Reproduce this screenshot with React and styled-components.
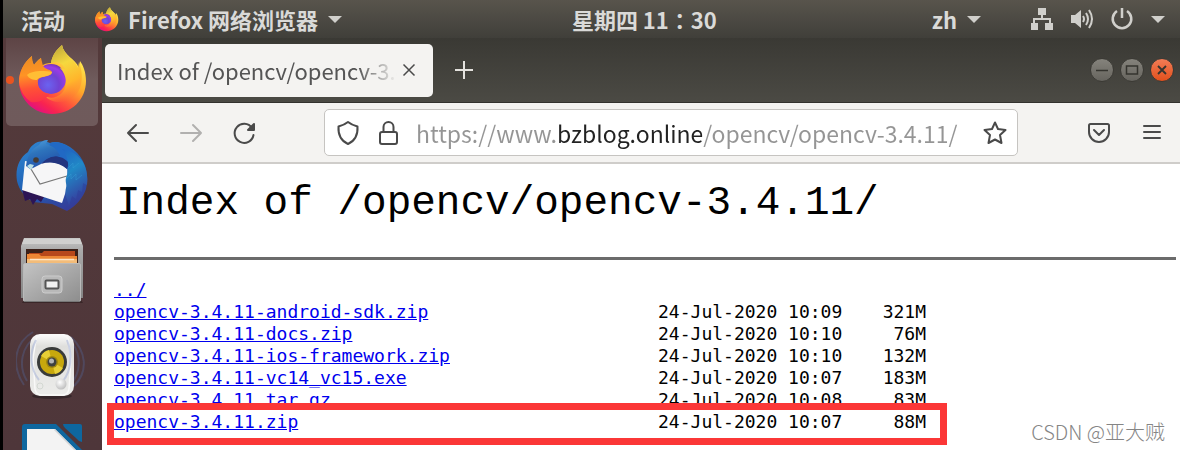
import React from 'react';
import styled, {createGlobalStyle} from 'styled-components';

const GlobalStyle = createGlobalStyle`
	* {
		box-sizing : border-box;
	}
	body {
		margin : 0;
		background : #000;
		font-family : "Noto Sans CJK SC", "Noto Sans", sans-serif;
	}
	button {
		padding : 0;
		border : 0;
		background : none;
		color : inherit;
		font : inherit;
		cursor : pointer;
	}
	svg {
		display : block;
	}
`
const Desktop = styled.div`
	display : flex;
	flex-direction : column;
	height : 100vh;
	padding-left : 3px;
	overflow : hidden;
`

// top panel
const Panel = styled.header`
	flex : none;
	display : flex;
	align-items : center;
	height : 38px;
	padding : 0 14px 0 18px;
	background : linear-gradient(#58544c, #403f3a);
	color : #dadad8;
	font-size : 22px;
	font-weight : 700;
	line-height : 38px;
`
const PanelItem = styled.button`
	display : flex;
	align-items : center;
	gap : ${props => props.$gap || 9}px;
	height : 38px;
	margin-right : ${props => props.$after || 0}px;
	white-space : nowrap;
	color : #dadad8;
`
const Clock = styled.div`
	flex : 1;
	padding-left : 14px;
	text-align : center;
	font-family : "Noto Sans CJK TC", "Noto Sans", sans-serif;
`

const Workspace = styled.div`
	flex : 1;
	display : flex;
	min-height : 0;
`

// dock
const Dock = styled.nav`
	flex : none;
	width : 99px;
	overflow : hidden;
	background : linear-gradient(#543a3b, #4e363a);
`
const DockList = styled.div`
	display : flex;
	flex-direction : column;
	gap : 3px;
	padding : 0 4px 0 3px;
	margin-top : -4px;
`
const DockButton = styled.button`
	flex : none;
	position : relative;
	display : flex;
	align-items : center;
	justify-content : center;
	height : 92px;
	border-radius : 5px;
	background : ${props => props.$active ? 'linear-gradient(#5c4243, #6f5b5c 50%, #6f5a5b)' : 'none'};
`
const RunningDot = styled.span`
	position : absolute;
	left : 0;
	top : 42px;
	width : 8px;
	height : 8px;
	border-radius : 50%;
	background : #e95420;
`

// browser window
const Window = styled.main`
	flex : 1;
	display : flex;
	flex-direction : column;
	min-width : 0;
	background : #fff;
`
const TabStrip = styled.div`
	flex : none;
	display : flex;
	align-items : center;
	height : 65px;
	padding : 0 6px 0 3px;
	background : linear-gradient(#3a3934, #4b4a44);
	border-bottom : 1px solid #33322e;
`
const Tab = styled.div`
	display : flex;
	align-items : center;
	width : 328px;
	height : 53px;
	padding : 0 12px;
	border-radius : 5px;
	background : #f4f3f1;
	color : #555;
`
const TabTitle = styled.button`
	flex : 1;
	min-width : 0;
	overflow : hidden;
	white-space : nowrap;
	text-align : left;
	font-size : 22px;
	line-height : 34px;
	mask-image : linear-gradient(to right, #000 86%, transparent);
`
const TabClose = styled.button`
	width : 24px;
	height : 24px;
	display : grid;
	place-items : center;
`
const NewTab = styled.button`
	width : 62px;
	height : 53px;
	display : grid;
	place-items : center;
	color : #e4e2de;
`
const WindowButtons = styled.div`
	display : flex;
	gap : 6px;
	margin-left : auto;
`
const WindowButton = styled.button`
	width : 24px;
	height : 24px;
	display : grid;
	place-items : center;
	border-radius : 50%;
	border : 1px solid #3b3a35;
	color : #35342f;
	background : ${props => props.$close ? 'linear-gradient(#f27c56, #e2501c)' : 'linear-gradient(#85837c, #66645e)'};
`
const Toolbar = styled.div`
	flex : none;
	display : flex;
	align-items : center;
	height : 61px;
	padding : 0 2px 0 9px;
	background : #f4f3f1;
	border-bottom : 2px solid #cfcdca;
	color : #4a4a4a;
`
const ToolButton = styled.button`
	flex : none;
	display : grid;
	place-items : center;
	width : 53px;
	height : 44px;
	color : ${props => props.disabled ? '#b1b0af' : '#4a4a4a'};
`
const UrlBar = styled.div`
	flex : 1;
	display : flex;
	align-items : center;
	gap : 16px;
	min-width : 0;
	height : 47px;
	margin : 0 54px;
	padding : 0 10px 0 11px;
	background : #fff;
	border : 1px solid #c6c4c1;
	border-radius : 5px;
`
const IconButton = styled.button`
	flex : none;
	display : grid;
	place-items : center;
`
// the host part of the address is darker than the rest
const UrlInput = styled.input`
	flex : 1;
	min-width : 0;
	height : 42px;
	padding : 0;
	border : 0;
	outline : 0;
	font-family : inherit;
	font-size : 23px;
	background : linear-gradient(to right, #959595 139px, #222 139px, #222 286px, #959595 286px);
	background-clip : text;
	-webkit-text-fill-color : transparent;
`

// listing
const Page = styled.section`
	flex : 1;
	position : relative;
	min-height : 0;
	padding : 6px 4px 0 12px;
	color : #000;
`
const Title = styled.h1`
	margin : 0 0 21px 2px;
	font-family : "Liberation Mono", monospace;
	font-size : 41px;
	font-weight : 400;
	line-height : 66px;
	white-space : nowrap;
`
const Rule = styled.hr`
	height : 3px;
	margin : 0 0 19px;
	border : 0;
	background : #6b6b6b;
`
const Listing = styled.table`
	width : 812px;
	table-layout : fixed;
	border-collapse : collapse;
	font-family : "DejaVu Sans Mono", monospace;
	font-size : 18px;
	line-height : 22px;
	td {
		padding : 0;
		height : 22px;
		white-space : nowrap;
	}
`
const Row = styled.tr`
	position : relative;
`
const Marker = styled.span`
	position : absolute;
	inset : -8px -21px -12px -7px;
	border : 7px solid #fb3737;
	pointer-events : none;
`
const FileLink = styled.a`
	color : #0000ee;
	text-decoration : underline;
`
const SizeCell = styled.td`
	text-align : right;
`
const Watermark = styled.div`
	position : absolute;
	right : 15px;
	bottom : 3px;
	font-size : 20px;
	font-weight : 300;
	line-height : 30px;
	color : #858585;
`

const Caret = () => (
	<svg width="16" height="9" viewBox="0 0 16 9"><path d="M1 1h14L8 8z" fill="#d0cfcb" /></svg>
)

const FirefoxIcon = ({size, id}) => (
	<svg width={size} height={size} viewBox="0 0 72 72">
		<defs>
			<linearGradient id={id + 'body'} x1="0.8" y1="0.1" x2="0.25" y2="0.95">
				<stop offset="0.1" stopColor="#ffe14a" />
				<stop offset="0.4" stopColor="#ffab2a" />
				<stop offset="0.65" stopColor="#ff5a3a" />
				<stop offset="0.85" stopColor="#f9244f" />
				<stop offset="1" stopColor="#e2117f" />
			</linearGradient>
			<linearGradient id={id + 'flame'} x1="0.3" y1="0" x2="0.6" y2="1">
				<stop offset="0" stopColor="#bda63a" />
				<stop offset="0.35" stopColor="#f5d83f" />
				<stop offset="0.7" stopColor="#ffb52b" />
				<stop offset="1" stopColor="#ff6a36" stopOpacity="0" />
			</linearGradient>
			<radialGradient id={id + 'globe'} cx="0.4" cy="0.7" r="0.75">
				<stop offset="0" stopColor="#6a63f0" />
				<stop offset="0.5" stopColor="#7142d2" />
				<stop offset="0.8" stopColor="#9a3be6" />
				<stop offset="1" stopColor="#6b2fa8" />
			</radialGradient>
			<linearGradient id={id + 'head'} x1="0.3" y1="0" x2="0.4" y2="1">
				<stop offset="0" stopColor="#e98b22" />
				<stop offset="0.4" stopColor="#ff9425" />
				<stop offset="0.7" stopColor="#ff5236" />
				<stop offset="1" stopColor="#fb3347" />
			</linearGradient>
		</defs>
		<path d="M16 12C8 18 3 28 3 37c0 19 15 33 33 33 19 0 34-14 34-33 0-9-3-16-6-20l-1 7C59 14 48 12 46 1c-6 5-10 11-11 18-4 0-7 1-10 3v-8c-3 2-5 4-7 7-2-3-2-6-2-9z" fill={'url(#' + id + 'body)'} />
		<circle cx="35" cy="35" r="15" fill={'url(#' + id + 'globe)'} />
		<path d="M46 1c-6 5-10 11-11 18 7-2 12 1 14 6l-5-1c7 7 8 18 2 25-5 5-12 6-17 3 9 10 29 8 35-8 3-9 2-18-1-26l-1 6C58 14 48 12 46 1z" fill={'url(#' + id + 'flame)'} />
		<path d="M16 12C8 18 3 28 3 38c1 9 6 16 12 20 7 1 14-2 19-8-9-1-13-7-12-14 2-3 5-3 9-4 3-1 5-2 5-4-2-3-6-2-9-6l-2-8c-3 2-5 4-7 7-2-3-2-6-2-9z" fill={'url(#' + id + 'head)'} />
		<path d="M11 31c3-3 9-4 14-4 5 0 8 0 11 1 0 2-2 3-5 4-4 1-8 1-10 4-4 0-8-1-10-5z" fill="#ffbe35" />
	</svg>
)

const ThunderbirdIcon = () => (
	<svg width="72" height="72" viewBox="0 0 72 72">
		<defs>
			<linearGradient id="tbBlue" x1="0.2" y1="0" x2="0.7" y2="1">
				<stop offset="0" stopColor="#2f83cf" />
				<stop offset="0.5" stopColor="#1f62b5" />
				<stop offset="1" stopColor="#353b98" />
			</linearGradient>
			<linearGradient id="tbWing" x1="0" y1="0" x2="0.3" y2="1">
				<stop offset="0" stopColor="#1f63c2" />
				<stop offset="0.45" stopColor="#2189c6" />
				<stop offset="1" stopColor="#35409f" />
			</linearGradient>
			<linearGradient id="tbHead" x1="0.2" y1="0" x2="0.6" y2="1">
				<stop offset="0" stopColor="#4f9fdd" />
				<stop offset="0.4" stopColor="#2e74bc" />
				<stop offset="1" stopColor="#1f4da8" />
			</linearGradient>
		</defs>
		<path d="M12 13C3 19-1 30 1 42c2 9 8 16 16 21l19 2 15 7c9-5 16-13 19-22 4-17-2-33-16-42-8-5-15-6-20-4-10-5-19 1-22 9z" fill="url(#tbBlue)" />
		<path d="M6 50l3 12 5-2 3 6 4-6 4 3 3-5-12-9z" fill="#2c1555" />
		<path d="M9 22L6 51l40 13 6-18-1-20-15-3-17 1z" fill="#f6f6f7" />
		<path d="M12 25l12 20 27-8" fill="none" stroke="#777" strokeWidth="1.2" />
		<path d="M34 4c10-3 20 3 26 12l-9 14c-6-6-14-8-22-7z" fill="#2169c4" />
		<path d="M25 25c6-9 19-11 28-1l-2 6c-7-6-16-8-26-5z" fill="#23357f" />
		<path d="M10 27c1-9 5-17 13-21 2-3 4-5 9-5l-2 4c7 2 12 6 14 12-8-1-14 3-19 8l-8 4-3 1z" fill="url(#tbHead)" />
		<path d="M11 27l3-2 4 1-3 5z" fill="#b9dfe4" />
		<circle cx="20" cy="21" r="2.800" fill="#443b35" />
		<path d="M46 10c20 4 27 18 25 36l-4-2-1 9-4-2-2 9-4-3-3 10c-1-6-5-11-3-18 1-4-1-6 0-10 3-8 4-19-4-29z" fill="url(#tbWing)" />
		<path d="M50 40l5-5v5l5-5v6l6-5M52 29l5-5v5l6-5" fill="none" stroke="#37a0d6" strokeWidth="1" opacity="0.4" />
	</svg>
)

const FilesIcon = () => (
	<svg width="72" height="72" viewBox="0 0 72 72">
		<defs>
			<linearGradient id="fiFront" x1="0" y1="0" x2="1" y2="1">
				<stop offset="0" stopColor="#c4c4c4" />
				<stop offset="1" stopColor="#8d8d8d" />
			</linearGradient>
			<linearGradient id="fiBack" x1="0" y1="0" x2="0" y2="1">
				<stop offset="0" stopColor="#c8c8c7" />
				<stop offset="0.2" stopColor="#aaa" />
				<stop offset="1" stopColor="#858585" />
			</linearGradient>
		</defs>
		<path d="M8 66h57l2 3H6z" fill="#392628" />
		<path d="M8 4h56l3 8v52H5V12z" fill="url(#fiBack)" />
		<path d="M8 5h56l2 5H6z" fill="#d0d0cf" />
		<path d="M10 15h52v15H10z" fill="#3b211a" />
		<path d="M13 19h13l2-2h31v12H13z" fill="#b8481b" />
		<path d="M11 20h12l2 2h36v8H11z" fill="#ed8735" />
		<path d="M11 25h50v5H11z" fill="#f3bc79" />
		<path d="M14 25.5h44" stroke="#ffe6c8" strokeWidth="1.5" />
		<rect x="7.500" y="29.500" width="57" height="38" rx="1.500" fill="url(#fiFront)" stroke="#bababa" />
		<path d="M8 67.5h56" stroke="#777" />
		<rect x="26" y="42" width="20" height="17" rx="3" fill="#b9b9b9" stroke="#ccc" />
		<rect x="29.500" y="46.500" width="13" height="8" rx="1" fill="#f0f0f0" stroke="#555" strokeWidth="2" />
	</svg>
)

const RhythmboxIcon = () => (
	<svg width="72" height="72" viewBox="0 0 72 72">
		<defs>
			<linearGradient id="rbBody" x1="0" y1="0" x2="0" y2="1">
				<stop offset="0" stopColor="#fdfdfd" />
				<stop offset="0.2" stopColor="#dfdfdd" />
				<stop offset="1" stopColor="#ececea" />
			</linearGradient>
			<radialGradient id="rbKnob" cx="0.4" cy="0.35" r="0.7">
				<stop offset="0" stopColor="#fff" />
				<stop offset="1" stopColor="#bbb" />
			</radialGradient>
		</defs>
		<g fill="none" stroke="#526292" strokeWidth="2" opacity="0.4">
			<path d="M17 3C-2 14-5 37 8 56M21 7C5 17 2 37 11 52M55 8c15 14 18 34 3 49M57 15c8 12 8 28-2 40" />
		</g>
		<ellipse cx="36" cy="67" rx="20" ry="3" fill="#35272a" />
		<rect x="14" y="5" width="44" height="62" rx="10" fill="url(#rbBody)" />
		<path d="M20 10q2-4 7-4h18q5 0 7 4l3 20-2 30q-1 6-7 6H26q-6 0-7-6l-2-30z" fill="none" stroke="#f9f9f8" strokeWidth="1.5" />
		<g fill="none" stroke="#a5b3d7" strokeWidth="2" opacity="0.55">
			<path d="M20 11C13 24 14 40 23 51M51 11c6 15 4 31-4 41" />
		</g>
		<circle cx="36" cy="33" r="15" fill="#393b3a" />
		<circle cx="36" cy="33" r="12" fill="#c8a80d" />
		<path d="M36 33L25 27a12 12 0 0 1 8-6zM36 33l11 6a12 12 0 0 1-8 6z" fill="#e7ce36" />
		<circle cx="36" cy="33" r="6" fill="#9f860e" />
		<circle cx="36" cy="33" r="4.500" fill="#3e4140" />
		<circle cx="35.500" cy="32" r="2.500" fill="#b3b5b4" />
		<circle cx="45" cy="55" r="5.500" fill="url(#rbKnob)" />
		<circle cx="24" cy="57" r="3" fill="none" stroke="#d3d8d2" />
	</svg>
)

const WriterIcon = () => (
	<svg width="72" height="72" viewBox="0 0 72 72">
		<path d="M9 0h31l26 26v46H6V3q0-3 3-3z" fill="#0e679f" />
		<path d="M11 5h28l23 23v40H11z" fill="#f3f3f3" />
		<path d="M39 5l23 23v2L38 6z" fill="#d6d6d6" />
		<path d="M47 0h17q2 0 2 2v16q-3 0-5-3L49 4q-2-2-2-4z" fill="#0e679f" />
	</svg>
)

const dockApps = [
	{name : 'Firefox', icon : <FirefoxIcon size={72} id="dock" />, active : true},
	{name : 'Thunderbird', icon : <ThunderbirdIcon />},
	{name : 'Files', icon : <FilesIcon />},
	{name : 'Rhythmbox', icon : <RhythmboxIcon />},
	{name : 'LibreOffice Writer', icon : <WriterIcon />},
]

const files = [
	{name : '../'},
	{name : 'opencv-3.4.11-android-sdk.zip', date : '24-Jul-2020 10:09', size : '321M'},
	{name : 'opencv-3.4.11-docs.zip', date : '24-Jul-2020 10:10', size : '76M'},
	{name : 'opencv-3.4.11-ios-framework.zip', date : '24-Jul-2020 10:10', size : '132M'},
	{name : 'opencv-3.4.11-vc14_vc15.exe', date : '24-Jul-2020 10:07', size : '183M'},
	{name : 'opencv-3.4.11.tar.gz', date : '24-Jul-2020 10:08', size : '83M'},
	{name : 'opencv-3.4.11.zip', date : '24-Jul-2020 10:07', size : '88M', marked : true},
]

const TopPanel = () => (
	<Panel>
		<PanelItem $after={29}>活动</PanelItem>
		<PanelItem>
			<FirefoxIcon size={25} id="panel" />
			<span>Firefox 网络浏览器</span>
			<Caret />
		</PanelItem>
		<Clock>星期四 11：30</Clock>
		<PanelItem $after={48}>zh<Caret /></PanelItem>
		<PanelItem $gap={16} aria-label="System">
			<svg width="24" height="24" viewBox="0 0 24 24" fill="#d0cfcb">
				<path d="M8 1h8v7h-3v3h8v5h2v7h-8v-7h4v-3H5v3h3v7H1v-7h2v-5h8V8H8z" />
			</svg>
			<svg width="24" height="24" viewBox="0 0 24 24">
				<path d="M1 8h4l6-5v18l-6-5H1z" fill="#d0cfcb" />
				<path d="M13 9q2 3 0 6M16 6q4 6 0 12M19 3q6 9 0 18" fill="none" stroke="#d0cfcb" strokeWidth="2" />
			</svg>
			<svg width="24" height="24" viewBox="0 0 24 24" fill="none" stroke="#d0cfcb" strokeWidth="2.500">
				<path d="M7 4a9.300 9.300 0 1 0 10 0M12 1v10" />
			</svg>
			<Caret />
		</PanelItem>
	</Panel>
)

const Launcher = () => (
	<Dock>
		<DockList>
			{dockApps.map(app => (
				<DockButton key={app.name} $active={app.active} aria-label={app.name}>
					{app.icon}
					{app.active && <RunningDot />}
				</DockButton>
			))}
		</DockList>
	</Dock>
)

const Tabs = () => (
	<TabStrip>
		<Tab>
			<TabTitle>Index of /opencv/opencv-3.4.11/</TabTitle>
			<TabClose aria-label="Close tab">
				<svg width="14" height="14" viewBox="0 0 14 14" stroke="#4a4a4a" strokeWidth="1.500"><path d="M1.500 1.500l11 11M12.500 1.500l-11 11" /></svg>
			</TabClose>
		</Tab>
		<NewTab aria-label="New tab">
			<svg width="20" height="20" viewBox="0 0 20 20" stroke="currentColor" strokeWidth="2"><path d="M10 1v18M1 10h18" /></svg>
		</NewTab>
		<WindowButtons>
			<WindowButton aria-label="Minimize">
				<svg width="14" height="14" viewBox="0 0 14 14"><path d="M1 7.500h12" stroke="currentColor" strokeWidth="1.500" /></svg>
			</WindowButton>
			<WindowButton aria-label="Maximize">
				<svg width="14" height="14" viewBox="0 0 14 14"><path d="M1.500 3h11v8h-11z" fill="none" stroke="currentColor" strokeWidth="1.500" /></svg>
			</WindowButton>
			<WindowButton $close aria-label="Close">
				<svg width="14" height="14" viewBox="0 0 14 14"><path d="M3 3l8 8M11 3l-8 8" stroke="currentColor" strokeWidth="1.800" /></svg>
			</WindowButton>
		</WindowButtons>
	</TabStrip>
)

const Stroke = ({children}) => (
	<svg width="24" height="26" viewBox="0 0 24 26" fill="none" stroke="currentColor" strokeWidth="2" strokeLinecap="round" strokeLinejoin="round">{children}</svg>
)

const Navigation = () => (
	<Toolbar>
		<ToolButton aria-label="Back"><Stroke><path d="M22 13H2M10 5l-8 8 8 8" /></Stroke></ToolButton>
		<ToolButton aria-label="Forward" disabled><Stroke><path d="M2 13h20M14 5l8 8-8 8" /></Stroke></ToolButton>
		<ToolButton aria-label="Reload">
			<Stroke><path d="M20 8A9.500 9.500 0 1 0 21.500 15" /><path d="M22 4v6h-6z" fill="currentColor" /></Stroke>
		</ToolButton>
		<UrlBar>
			<IconButton aria-label="Tracking protection">
				<Stroke><path d="M12 2c3 2.500 6 3.500 9.500 4.500.5 8-2 14-9.500 17.500C4.500 20.500 2 14.500 2.500 6.500 6 5.500 9 4.500 12 2z" /></Stroke>
			</IconButton>
			<IconButton aria-label="Site information">
				<Stroke><rect x="4" y="12" width="17" height="12" rx="2" /><path d="M7.500 12V7a5 5 0 0 1 10 0v5" /></Stroke>
			</IconButton>
			<UrlInput aria-label="Address" defaultValue="https://www.bzblog.online/opencv/opencv-3.4.11/" spellCheck={false} />
			<IconButton aria-label="Bookmark">
				<Stroke><path d="M12 2.500l3 6.500 7.500 1-5.500 5 1.500 8L12 19.500 5.500 23 7 15l-5.500-5L9 9z" /></Stroke>
			</IconButton>
		</UrlBar>
		<ToolButton aria-label="Pocket">
			<Stroke><path d="M3.500 4h17q1.500 0 1.500 1.500V12a10 10 0 0 1-20 0V5.500Q2 4 3.500 4zM7 10l5 5 5-5" /></Stroke>
		</ToolButton>
		<ToolButton aria-label="Menu"><Stroke><path d="M4 6h16M4 12h16M4 18h16" /></Stroke></ToolButton>
	</Toolbar>
)

const DirectoryIndex = () => (
	<Page>
		<Title>Index of /opencv/opencv-3.4.11/</Title>
		<Rule />
		<Listing>
			<colgroup>
				<col style={{width : '67%'}} />
				<col style={{width : '23%'}} />
				<col />
			</colgroup>
			<tbody>
				{files.map(file => (
					<Row key={file.name}>
						<td>
							<FileLink href={file.name}>{file.name}</FileLink>
							{file.marked && <Marker />}
						</td>
						<td>{file.date}</td>
						<SizeCell>{file.size}</SizeCell>
					</Row>
				))}
			</tbody>
		</Listing>
		<Watermark>CSDN @亚大贼</Watermark>
	</Page>
)

const App = () => (
	<React.Fragment>
		<GlobalStyle />
		<Desktop>
			<TopPanel />
			<Workspace>
				<Launcher />
				<Window>
					<Tabs />
					<Navigation />
					<DirectoryIndex />
				</Window>
			</Workspace>
		</Desktop>
	</React.Fragment>
)

export default App;
